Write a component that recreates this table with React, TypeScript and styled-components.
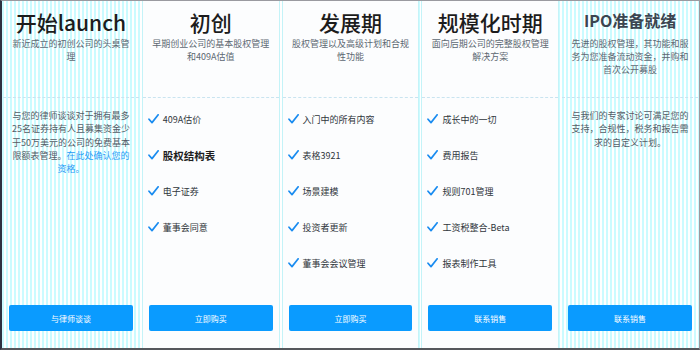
import React from "react";
import styled, { createGlobalStyle } from "styled-components";

const Global = createGlobalStyle`
  html, body { margin: 0; padding: 0; width: 700px; height: 350px; overflow: hidden; }
  body { font-family: "Noto Sans CJK SC", "Noto Sans", sans-serif; background: #fff; }
  * { box-sizing: border-box; }
`;

const Frame = styled.div`
  width: 700px;
  height: 350px;
  border: 1px solid #9a9aa0;
  border-left: 2px solid #2e3140;
  border-bottom: 2px solid #55575c;
  background: repeating-linear-gradient(90deg, #cbfbff 0 2px, #ffffff 2px 4px);
  display: grid;
  grid-template-columns: repeat(5, 1fr);
  column-gap: 2px;
`;

const Column = styled.div<{ $solid?: boolean }>`
  display: flex;
  flex-direction: column;
  min-width: 0;
  background: ${(p) => (p.$solid ? "#fcfdfe" : "transparent")};
  border-left: 1px solid ${(p) => (p.$solid ? "#c4f3f8" : "transparent")};
  border-right: 1px solid ${(p) => (p.$solid ? "#c4f3f8" : "transparent")};
`;

const Header = styled.div`
  height: 97px;
  border-bottom: 1px dashed #c9e4f0;
  display: flex;
  flex-direction: column;
  align-items: center;
  padding-top: 6px;
  text-align: center;
`;

const Title = styled.div<{ $small?: boolean }>`
  height: 30px;
  line-height: ${(p) => (p.$small ? "26px" : "30px")};
  font-size: ${(p) => (p.$small ? "16px" : "21px")};
  font-weight: ${(p) => (p.$small ? 700 : 500)};
  color: ${(p) => (p.$small ? "#3b4550" : "#1c1c1c")};
  white-space: nowrap;
`;

const Subtitle = styled.div`
  font-size: 9px;
  line-height: 13.1px;
  color: #5d6872;
  white-space: nowrap;
`;

const Body = styled.div`
  flex: 1;
  padding: 11px 6px 0;
  font-size: 9px;
  line-height: 13.3px;
  color: #555d66;
  text-align: center;
  white-space: nowrap;
`;

const LinkText = styled.span`
  color: #1f9bf5;
`;

const Features = styled.ul`
  flex: 1;
  list-style: none;
  margin: 0;
  padding: 3px 0 0 5px;
`;

const Feature = styled.li<{ $strong?: boolean }>`
  height: 36px;
  display: flex;
  align-items: center;
  gap: 4px;
  font-size: ${(p) => (p.$strong ? "10.5px" : "9px")};
  font-weight: ${(p) => (p.$strong ? 700 : 400)};
  color: ${(p) => (p.$strong ? "#1e1e1e" : "#30363c")};
  white-space: nowrap;
`;

const CheckIcon = styled.svg`
  width: 11px;
  height: 10px;
  flex: none;
`;

const Button = styled.button`
  margin: 0 6px 17px;
  height: 26px;
  border: none;
  border-radius: 2px;
  background: #0a9bff;
  color: #ffffff;
  font-family: inherit;
  font-size: 8px;
  cursor: pointer;
`;

const Check = () => (
  <CheckIcon viewBox="0 0 11 10">
    <path d="M1 5.2 L4 8.6 L10.2 0.8" fill="none" stroke="#1a8cf0" strokeWidth="1.7" strokeLinecap="round" strokeLinejoin="round" />
  </CheckIcon>
);

type Plan = {
  title: string;
  small?: boolean;
  sub: string[];
  text?: React.ReactNode;
  features?: { label: string; strong?: boolean }[];
  cta: string;
  solid?: boolean;
};

const lines = (arr: string[]) =>
  arr.map((l, i) => (
    <React.Fragment key={i}>
      {l}
      {i < arr.length - 1 && <br />}
    </React.Fragment>
  ));

const plans: Plan[] = [
  {
    title: "开始launch",
    sub: ["新近成立的初创公司的头桌管", "理"],
    text: (
      <>
        与您的律师谈谈对于拥有最多
        <br />
        25名证券持有人且募集资金少
        <br />
        于50万美元的公司的免费基本
        <br />
        限额表管理。<LinkText>在此处确认您的</LinkText>
        <br />
        <LinkText>资格。</LinkText>
      </>
    ),
    cta: "与律师谈谈",
  },
  {
    title: "初创",
    sub: ["早期创业公司的基本股权管理", "和409A估值"],
    features: [
      { label: "409A估价" },
      { label: "股权结构表", strong: true },
      { label: "电子证券" },
      { label: "董事会同意" },
    ],
    cta: "立即购买",
    solid: true,
  },
  {
    title: "发展期",
    sub: ["股权管理以及高级计划和合规", "性功能"],
    features: [
      { label: "入门中的所有内容" },
      { label: "表格3921" },
      { label: "场景建模" },
      { label: "投资者更新" },
      { label: "董事会会议管理" },
    ],
    cta: "立即购买",
    solid: true,
  },
  {
    title: "规模化时期",
    sub: ["面向后期公司的完整股权管理", "解决方案"],
    features: [
      { label: "成长中的一切" },
      { label: "费用报告" },
      { label: "规则701管理" },
      { label: "工资税整合-Beta" },
      { label: "报表制作工具" },
    ],
    cta: "联系销售",
    solid: true,
  },
  {
    title: "IPO准备就绪",
    small: true,
    sub: ["先进的股权管理，其功能和服", "务为您准备流动资金，并购和", "首次公开募股"],
    text: lines(["与我们的专家讨论可满足您的", "支持，合规性，税务和报告需", "求的自定义计划。"]),
    cta: "联系销售",
  },
];

export default function App() {
  return (
    <>
      <Global />
      <Frame>
        {plans.map((p, i) => (
          <Column key={i} $solid={p.solid}>
            <Header>
              <Title $small={p.small}>{p.title}</Title>
              <Subtitle>{lines(p.sub)}</Subtitle>
            </Header>
            {p.features ? (
              <Features>
                {p.features.map((f, j) => (
                  <Feature key={j} $strong={f.strong}>
                    <Check />
                    {f.label}
                  </Feature>
                ))}
              </Features>
            ) : (
              <Body>{p.text}</Body>
            )}
            <Button>{p.cta}</Button>
          </Column>
        ))}
      </Frame>
    </>
  );
}
